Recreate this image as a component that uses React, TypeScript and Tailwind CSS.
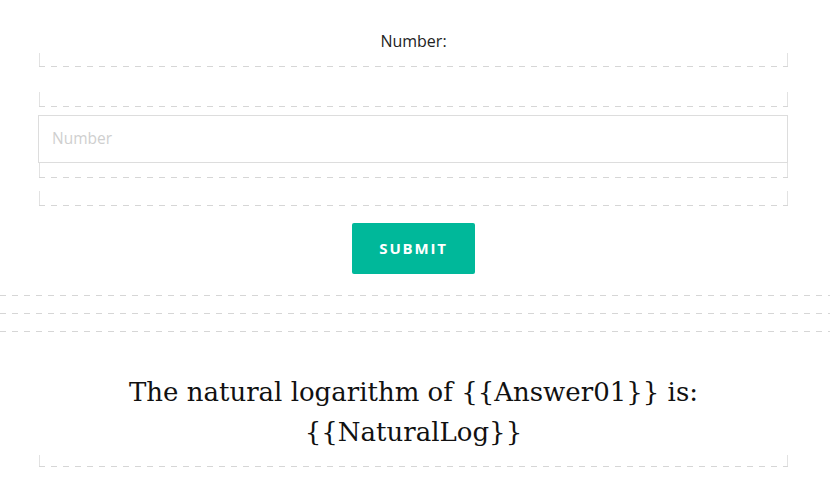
import React from "react";

const dash =
  "h-px bg-[linear-gradient(to_right,#d6d6d6_0,#d6d6d6_6px,transparent_6px,transparent_12px)] bg-[length:12px_1px] bg-repeat-x";

function DashBox({ h, className = "" }: { h: string; className?: string }) {
  return (
    <div className={`flex flex-col ${h} ${className}`}>
      <div className="flex-1 border-x border-[#e2e2e2]" />
      <div className={dash} />
    </div>
  );
}

export default function App() {
  return (
    <div className="w-[830px] h-[480px] bg-white overflow-hidden font-['Open_Sans',sans-serif]">
      <div className="mx-[39px] w-[749px]">
        <div className="pt-[31px] text-center text-[16px] leading-[20px] text-[#222]">Number:</div>
        <DashBox h="h-[14px]" className="mt-[2px]" />
        <DashBox h="h-[15px]" className="mt-[25px]" />
        <div className="mt-[8px] ml-[-1px] w-[750px] h-[48px] border border-[#dddddd] flex items-center px-[13px] text-[15.5px] text-[#cfcfcf]">
          Number
        </div>
        <DashBox h="h-[15px]" />
        <DashBox h="h-[15px]" className="mt-[13px]" />
        <div className="mt-[17px] flex justify-center">
          <button className="w-[123px] h-[51px] rounded-[2px] bg-[#00b89a] text-white text-[15px] font-bold tracking-[1.8px] font-['Open_Sans',sans-serif]">
            SUBMIT
          </button>
        </div>
      </div>
      <div className={`${dash} mt-[21px]`} />
      <div className={`${dash} mt-[17px]`} />
      <div className={`${dash} mt-[17px]`} />
      <div className="mx-[39px] w-[749px]">
        <div className="mt-[40px] text-center text-[26px] leading-[40px] text-[#111] font-['DejaVu_Serif',serif]">
          The natural logarithm of {"{{Answer01}}"} is:
          <br />
          {"{{NaturalLog}}"}
        </div>
        <DashBox h="h-[12px]" className="mt-[3px]" />
      </div>
    </div>
  );
}
